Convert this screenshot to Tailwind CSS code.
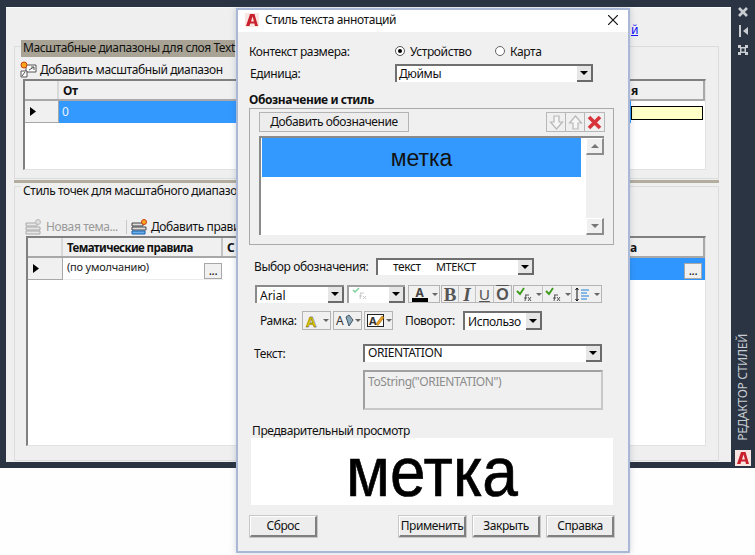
<!DOCTYPE html>
<html lang="ru">
<head>
<meta charset="utf-8">
<script src="https://cdn.jsdelivr.net/npm/@tailwindcss/browser@4"></script>
</head>
<body class="bg-white">
<div class="relative w-[755px] h-[555px] overflow-hidden bg-[#fefefe] text-[12px] leading-[16px] tracking-[-0.4px] text-[#111] font-['Noto_Sans',sans-serif]">

  <!-- background window -->
  <div class="flex h-[468px] bg-[#2b3442] pt-[7px] pb-[6px] pl-[6px]">
    <div class="w-[725px] h-[455px] bg-[#efefef] pl-[8px] border-t border-[#fafafa]">
      <div class="h-[38px] pl-[617px] pt-[14px] text-[#1212ff] underline">й</div>

      <!-- group 1 -->
      <div class="relative w-[705px] h-[133px] border border-[#dcdcdc] pl-[8px]">
        <div class="absolute left-[6px] top-[-7px] h-[17px] w-[214px] bg-[#a8a395] pl-[2px] text-[#111] whitespace-nowrap">Масштабные диапазоны для слоя Text</div>
        <div class="flex items-center h-[19px] mt-[13px] gap-[3px]">
          <svg width="17" height="17" viewBox="0 0 17 17" class="ml-[-3px]"><path d="M6 4h10v7H6z" fill="#fff" stroke="#555"/><path d="M9 9l5-3M14 6h-3M14 6v3" stroke="#555" fill="none"/><path d="M1 10h6v6H1z" fill="#fff" stroke="#555"/><path d="M5 11l-3 4" stroke="#555"/><circle cx="4" cy="4" r="3" fill="#f5a81c" stroke="#d33c10"/></svg>
          <span class="whitespace-nowrap">Добавить масштабный диапазон</span>
        </div>
        <!-- grid 1 -->
        <div class="w-[683px] h-[91px] border-t-2 border-l-2 border-[#808080] border-r border-b border-r-[#e2e2e2] border-b-[#e2e2e2] bg-white">
          <div class="flex h-[20px] bg-[#f0f0f0] border-b-2 border-[#a8a8a8] border-r-2 border-r-[#a8a8a8]">
            <div class="w-[34px] border-r-2 border-[#d8d8d8]"></div>
            <div class="w-[572px] pl-[4px] font-bold leading-[19px]">От</div>
            <div class="flex-1 font-bold leading-[19px]">я</div>
          </div>
          <div class="flex h-[22px] bg-[#3399ff]">
            <div class="flex items-center w-[34px] pl-[5px] bg-[#f0f0f0] border-r border-b border-[#a8a8a8]">
              <svg width="6" height="9" viewBox="0 0 6 9"><path d="M0 0l6 4.500-6 4.500z" fill="#000"/></svg>
            </div>
            <div class="w-[572px] pl-[3px] text-[#e8f3ff] leading-[21px]">0</div>
            <div class="flex-1 bg-white pt-[5px] pr-[2px]">
              <div class="h-[14px] bg-[#ffffc8] border border-black"></div>
            </div>
          </div>
        </div>
      </div>

      <div class="w-[705px] h-[3px] mt-[1px] bg-[#b3ad9e]"></div>

      <!-- group 2 -->
      <div class="relative w-[705px] h-[275px] mt-[3px] border border-[#dcdcdc] pl-[11px]">
        <div class="absolute left-[6px] top-[-4px] bg-[#efefef] px-[2px] whitespace-nowrap">Стиль точек для масштабного диапазона</div>
        <div class="flex items-center h-[19px] mt-[30px] ml-[-1px] whitespace-nowrap">
          <svg width="17" height="16" viewBox="0 0 17 16"><g fill="#e6e6e6" stroke="#aaa"><path d="M1 4h11v3H1zM1 8h14v3H1zM1 12h14v3H1z"/></g><circle cx="13" cy="3" r="2.500" fill="#ddd" stroke="#bbb"/></svg>
          <span class="ml-[4px] text-[#9a9a9a] w-[80px]">Новая тема...</span>
          <span class="w-px h-[14px] bg-[#c8c8c8]"></span>
          <svg width="17" height="16" viewBox="0 0 17 16" class="ml-[4px]"><path d="M1 4h11v3H1z" fill="#ddd" stroke="#444"/><path d="M1 8h14v3H1z" fill="#ddd" stroke="#444"/><path d="M1 12h13v3H1z" fill="#68aee8" stroke="#1760b0"/><circle cx="13" cy="3" r="2.500" fill="#f5a81c" stroke="#d33c10"/></svg>
          <span class="ml-[3px]">Добавить правило</span>
        </div>
        <!-- grid 2 -->
        <div class="w-[680px] h-[210px] border-t-2 border-l-2 border-[#808080] border-r border-b border-r-[#e2e2e2] border-b-[#e2e2e2] bg-white">
          <div class="flex h-[20px] bg-[#f0f0f0] border-b-2 border-r-2 border-[#a8a8a8]">
            <div class="w-[35px] border-r-2 border-[#d8d8d8]"></div>
            <div class="w-[160px] pl-[4px] font-bold leading-[19px] text-[11.500px] tracking-[-0.6px] whitespace-nowrap border-r-2 border-[#c4c4c4]">Тематические правила</div>
            <div class="w-[407px] pl-[4px] font-bold leading-[19px]">С</div>
            <div class="flex-1 font-bold leading-[19px]">а</div>
          </div>
          <div class="flex h-[22px] bg-white">
            <div class="flex items-center w-[35px] pl-[5px] bg-[#f0f0f0] border-r border-b border-[#a8a8a8]">
              <svg width="6" height="9" viewBox="0 0 6 9"><path d="M0 0l6 4.500-6 4.500z" fill="#000"/></svg>
            </div>
            <div class="flex justify-between w-[160px] pl-[4px] pr-[1px] pt-[1px] border-b border-[#ececec]">
              <span class="whitespace-nowrap text-[11px] tracking-[-0.2px] text-[#222]">(по умолчанию)</span>
              <span class="w-[18px] h-[16px] mt-[4px] border border-[#a8a8a8] bg-[#f0f0f0] text-center leading-[13px]">...</span>
            </div>
            <div class="w-[407px]"></div>
            <div class="flex-1 bg-[#2f96ff] pl-[54px] pt-[5px]">
              <span class="block w-[18px] h-[16px] border border-[#a8a8a8] bg-[#f0f0f0] text-center leading-[13px]">...</span>
            </div>
          </div>
        </div>
      </div>
    </div>

    <!-- side bar -->
    <div class="w-[24px] flex flex-col items-center mt-[-7px] mb-[-6px] pt-[6px] text-[#c8ccd2]">
      <svg width="12" height="12" viewBox="0 0 12 12"><path d="M2 2l8 8M10 2l-8 8" stroke="#c9cdd2" stroke-width="2.600" fill="none"/></svg>
      <svg width="12" height="12" viewBox="0 0 12 12" class="mt-[7px]"><path d="M2 0h2v12H2z" fill="#c9cdd2"/><path d="M11 2v8L6 6z" fill="#c9cdd2"/></svg>
      <svg width="12" height="12" viewBox="0 0 12 12" class="mt-[7px]"><path d="M1 1h3v2h4V1h3v3H9v4h2v3H8V9H4v2H1V8h2V4H1z" fill="#c9cdd2"/><path d="M4.500 4.500h3v3h-3z" fill="#2b3442"/></svg>
      <div class="mt-auto mb-[9px] [writing-mode:vertical-rl] rotate-180 text-[12px] tracking-[-0.3px] whitespace-nowrap text-[#c9cdd2]">РЕДАКТОР СТИЛЕЙ</div>
      <div class="flex items-center justify-center w-[16px] h-[16px] mb-[2px] bg-[#f8e4e0]">
        <svg width="12" height="12" viewBox="0 0 12 12"><path fill-rule="evenodd" d="M4 0h4.500l3.500 12H9l-.6-2.500H4.200L3.500 12H0zM5 7.500h3L6.500 2.500z" fill="#c8202c"/></svg>
      </div>
    </div>
  </div>

  <!-- dialog -->
  <div class="absolute left-[236px] top-[8px] w-[394px] h-[545px] border-2 border-[#a9b8d6] bg-[#f0f0f0] shadow-[0_0_6px_rgba(60,80,110,0.25)]">
    <div class="flex items-center h-[22px] bg-white pl-[7px] pr-[10px] pb-[3px]">
      <span class="flex items-center justify-center w-[14px] h-[14px] bg-[#f8e4e0]">
        <svg width="12" height="12" viewBox="0 0 12 12"><path fill-rule="evenodd" d="M4 0h4.500l3.500 12H9l-.6-2.500H4.200L3.500 12H0zM5 7.500h3L6.500 2.500z" fill="#c8202c"/></svg>
      </span>
      <span class="ml-[6px]">Стиль текста аннотаций</span>
      <svg width="10" height="10" viewBox="0 0 10 10" class="ml-auto"><path d="M0 0l10 10M10 0L0 10" stroke="#111" stroke-width="1.200"/></svg>
    </div>

    <div class="flex items-center h-[18px] mt-[10px] pl-[11px]">
      <span class="w-[146px] whitespace-nowrap pt-[1px]">Контекст размера:</span>
      <span class="flex items-center justify-center w-[10px] h-[10px] rounded-full border border-[#555] bg-white ml-[0px]"><span class="w-[4px] h-[4px] rounded-full bg-black"></span></span>
      <span class="ml-[5px] w-[85px] pt-[1px]">Устройство</span>
      <span class="w-[10px] h-[10px] rounded-full border border-[#666] bg-white"></span>
      <span class="ml-[5px] pt-[1px]">Карта</span>
    </div>
    <div class="flex items-center h-[18px] mt-[4px] pl-[12px]">
      <span class="w-[145px] pt-[2px]">Единица:</span>
      <div class="flex w-[198px] h-[18px] bg-white border-t-2 border-l-2 border-[#707070]">
        <span class="flex-1 pl-[2px] leading-[15px]">Дюймы</span>
        <span class="flex items-center justify-center w-[16px] bg-[#e6e6e6] border-r-2 border-b-2 border-[#6a6a6a]"><svg width="8" height="4" viewBox="0 0 8 4"><path d="M0 0h8L4 4z" fill="#000"/></svg></span>
      </div>
    </div>
    <div class="h-[17px] mt-[9px] pl-[11px] pt-[1px] font-bold whitespace-nowrap">Обозначение и стиль</div>

    <div class="w-[365px] h-[137px] ml-[11px] border border-[#a9a9a9] pl-[9px] pt-[3px]">
      <div class="flex h-[20px]">
        <div class="flex items-center justify-center w-[150px] border border-[#b4b4b4] bg-[#ededed]">Добавить обозначение</div>
        <div class="flex ml-[137px] border border-[#b8b8b8] w-[59px]">
          <span class="flex items-center justify-center w-[19px] border-r border-[#b8b8b8]"><svg width="15" height="15" viewBox="0 0 15 15"><path d="M5 1h5v6h3.500L7.500 14 1.500 7H5z" fill="#f6f6f6" stroke="#b8b8b8" stroke-width="1.200"/></svg></span>
          <span class="flex items-center justify-center w-[19px] border-r border-[#b8b8b8]"><svg width="15" height="15" viewBox="0 0 15 15"><path d="M5 14h5V8h3.500L7.500 1 1.500 8H5z" fill="#f6f6f6" stroke="#b8b8b8" stroke-width="1.200"/></svg></span>
          <span class="flex items-center justify-center flex-1"><svg width="15" height="15" viewBox="0 0 15 15"><path d="M2 2l11 11M13 2L2 13" stroke="#d8343c" stroke-width="3.600"/></svg></span>
        </div>
      </div>
      <div class="flex mt-[4px] w-[345px] h-[99px] border-t-2 border-l-2 border-[#8a8a8a] bg-white">
        <div class="w-[325px] pl-[1px]">
          <div class="flex items-center justify-center w-[319px] h-[39px] bg-[#3399ff] text-[23px] tracking-[0px] text-[#111] font-['Liberation_Sans',sans-serif]">метка</div>
        </div>
        <div class="flex flex-col justify-between w-[18px] bg-[#f0f0f0]">
          <span class="flex items-center justify-center h-[17px] bg-[#f0f0f0] border-r-2 border-b-2 border-[#8d8d8d] border-t border-l border-t-white border-l-white"><svg width="8" height="4" viewBox="0 0 8 4"><path d="M0 4h8L4 0z" fill="#777"/></svg></span>
          <span class="flex items-center justify-center h-[17px] bg-[#f0f0f0] border-r-2 border-b-2 border-[#8d8d8d] border-t border-l border-t-white border-l-white"><svg width="8" height="4" viewBox="0 0 8 4"><path d="M0 0h8L4 4z" fill="#777"/></svg></span>
        </div>
      </div>
    </div>

    <div class="flex items-center h-[17px] mt-[13px] pl-[16px]">
      <span class="w-[122px] whitespace-nowrap pt-[1px]">Выбор обозначения:</span>
      <div class="flex w-[158px] h-[17px] bg-white border-t-2 border-l-2 border-[#707070]">
        <span class="pl-[15px] w-[58px] leading-[13px]">текст</span>
        <span class="flex-1 leading-[14px] text-[11px]">МТЕКСТ</span>
        <span class="flex items-center justify-center w-[16px] bg-[#e6e6e6] border-r-2 border-b-2 border-[#6a6a6a]"><svg width="8" height="4" viewBox="0 0 8 4"><path d="M0 0h8L4 4z" fill="#000"/></svg></span>
      </div>
    </div>

    <div class="flex items-center h-[18px] mt-[10px] pl-[17px]">
      <div class="flex w-[89px] h-[18px] bg-white border-t-2 border-l-2 border-[#8a8a8a]">
        <span class="flex-1 pl-[3px] leading-[17px] tracking-[0px]">Arial</span>
        <span class="flex items-center justify-center w-[16px] bg-[#e6e6e6] border-r-2 border-b-2 border-[#6a6a6a]"><svg width="8" height="4" viewBox="0 0 8 4"><path d="M0 0h8L4 4z" fill="#000"/></svg></span>
      </div>
      <div class="flex w-[58px] h-[18px] ml-[3px] bg-white border-t-2 border-l-2 border-[#a0a0a0]">
        <span class="flex-1 pl-[3px]"><svg width="16" height="13" viewBox="0 0 16 13"><path d="M1 3l2 2 4-4" stroke="#7fcf9a" stroke-width="1.500" fill="none"/><path d="M8 6h4M9 6l-1 6M7 9h3M11 9l3 3M14 9l-3 3" stroke="#c8c8c8" fill="none"/></svg></span>
        <span class="flex items-center justify-center w-[16px] bg-[#e6e6e6] border-r-2 border-b-2 border-[#6a6a6a]"><svg width="8" height="4" viewBox="0 0 8 4"><path d="M0 0h8L4 4z" fill="#000"/></svg></span>
      </div>
      <div class="flex items-center h-[18px] w-[32px] ml-[3px] border border-[#b4b4b4]">
        <span class="flex flex-col items-center w-[21px] pt-[1px]"><span class="text-[12px] leading-[11px] font-bold text-[#444]">A</span><span class="w-[16px] h-[4px] bg-black"></span></span>
        <svg width="6" height="3" viewBox="0 0 6 3" class="ml-[2px]"><path d="M0 0h6L3 3z" fill="#666"/></svg>
      </div>
      <div class="flex h-[18px] ml-[1px] border border-[#b4b4b4] font-['Liberation_Serif',serif] text-[19px] leading-[17px] tracking-[0px] text-[#555] text-center">
        <span class="w-[17px] font-bold border-r border-[#c4c4c4]">B</span>
        <span class="w-[17px] italic font-bold border-r border-[#c4c4c4]">I</span>
        <span class="w-[18px] font-['Liberation_Sans',sans-serif] text-[15px] underline border-r border-[#c4c4c4]">U</span>
        <span class="w-[17px] font-['Liberation_Sans',sans-serif] text-[16px] font-bold overline">O</span>
      </div>
      <div class="flex h-[18px] ml-[1px] border border-[#b4b4b4]">
        <span class="flex items-center w-[29px] border-r border-[#c4c4c4] pl-[2px]"><svg width="17" height="15" viewBox="0 0 17 15"><path d="M1 4l3 3 4-6" stroke="#3a9a18" stroke-width="1.800" fill="none"/><path d="M9 8h4M10 8l-1 6M8 11h3M12 10l3 4M15 10l-3 4" stroke="#555" fill="none"/></svg><svg width="6" height="3" viewBox="0 0 6 3" class="ml-[3px]"><path d="M0 0h6L3 3z" fill="#666"/></svg></span>
        <span class="flex items-center w-[29px] border-r border-[#c4c4c4] pl-[2px]"><svg width="17" height="15" viewBox="0 0 17 15"><path d="M1 4l3 3 4-6" stroke="#3a9a18" stroke-width="1.800" fill="none"/><path d="M9 8h4M10 8l-1 6M8 11h3M12 10l3 4M15 10l-3 4" stroke="#555" fill="none"/></svg><svg width="6" height="3" viewBox="0 0 6 3" class="ml-[3px]"><path d="M0 0h6L3 3z" fill="#666"/></svg></span>
        <span class="flex items-center w-[29px] pl-[2px]"><svg width="16" height="15" viewBox="0 0 16 15"><path d="M3 1v13M1.500 3L3 1l1.500 2M1.500 12L3 14l1.500-2" stroke="#111" fill="none"/><path d="M7 3h8M7 6h6M7 9h8M7 12h6" stroke="#1f7fd8" stroke-width="1.200"/></svg><svg width="6" height="3" viewBox="0 0 6 3" class="ml-[4px]"><path d="M0 0h6L3 3z" fill="#666"/></svg></span>
      </div>
    </div>

    <div class="flex items-center h-[19px] mt-[8px] pl-[22px]">
      <span class="w-[42px]">Рамка:</span>
      <div class="flex items-center w-[29px] h-[19px] border border-[#b4b4b4] pl-[3px]"><span class="w-[14px] text-[15px] tracking-[0px] font-bold text-[#d8c400] [-webkit-text-stroke:0.3px_#333]">A</span><svg width="6" height="3" viewBox="0 0 6 3" class="ml-[3px]"><path d="M0 0h6L3 3z" fill="#666"/></svg></div>
      <div class="flex items-center w-[29px] h-[19px] ml-[2px] border border-[#b4b4b4] pl-[2px]"><span class="w-[9px] text-[12px] tracking-[0px] text-[#333]">A</span><svg width="9" height="13" viewBox="0 0 9 13"><path d="M1 3l3-2 4 5-4 6z" fill="#8aa8b8" stroke="#456"/></svg><svg width="6" height="3" viewBox="0 0 6 3" class="ml-[1px]"><path d="M0 0h6L3 3z" fill="#666"/></svg></div>
      <div class="flex items-center w-[29px] h-[19px] ml-[2px] border border-[#b4b4b4] pl-[2px]">
        <span class="relative w-[17px] h-[13px] bg-white border border-[#222] text-[11px] leading-[11px] tracking-[0px] pl-[1px] font-bold text-[#333]">A<svg width="10" height="12" viewBox="0 0 10 12" class="absolute left-[7px] top-[-1px]"><path d="M1 10l6-8 2 1.500-6 8z" fill="#e8a020" stroke="#a86810" stroke-width=".6"/></svg></span>
        <svg width="6" height="3" viewBox="0 0 6 3" class="ml-[2px]"><path d="M0 0h6L3 3z" fill="#666"/></svg>
      </div>
      <span class="w-[58px] ml-[12px]">Поворот:</span>
      <div class="flex w-[79px] h-[19px] bg-white border-t-2 border-l-2 border-[#707070]">
        <span class="flex-1 pl-[3px] whitespace-nowrap leading-[17px]">Использо</span>
        <span class="flex items-center justify-center w-[16px] bg-[#e6e6e6] border-r-2 border-b-2 border-[#6a6a6a]"><svg width="8" height="4" viewBox="0 0 8 4"><path d="M0 0h8L4 4z" fill="#000"/></svg></span>
      </div>
    </div>

    <div class="flex items-center h-[18px] mt-[14px] pl-[16px]">
      <span class="w-[109px] pt-[1px]">Текст:</span>
      <div class="flex w-[239px] h-[18px] bg-white border-t-2 border-l-2 border-[#707070]">
        <span class="flex-1 pl-[3px] leading-[14px]">ORIENTATION</span>
        <span class="flex items-center justify-center w-[16px] bg-[#e6e6e6] border-r-2 border-b-2 border-[#6a6a6a]"><svg width="8" height="4" viewBox="0 0 8 4"><path d="M0 0h8L4 4z" fill="#000"/></svg></span>
      </div>
    </div>
    <div class="w-[240px] h-[40px] mt-[8px] ml-[125px] border-2 border-[#a0a0a0] border-r-[#c8c8c8] border-b-[#c8c8c8] pl-[3px] pt-[2px] text-[#8c8c8c] whitespace-nowrap">ToString("ORIENTATION")</div>

    <div class="h-[14px] mt-[14px] pl-[14px] leading-[14px] whitespace-nowrap">Предварительный просмотр</div>
    <div class="flex items-center justify-center w-[362px] h-[67px] ml-[13px] bg-white text-[64px] leading-[60px] tracking-[0px] text-black font-['Liberation_Sans',sans-serif]">
      <span class="inline-block scale-y-110 [-webkit-text-stroke:0.6px_black]">метка</span>
    </div>

    <div class="flex h-[21px] mt-[11px] ml-[12px]">
      <span class="flex items-center justify-center w-[67px] bg-[#ededed] border border-[#fff] border-r-2 border-b-2 border-r-[#808080] border-b-[#808080] outline outline-[#c8c8c8]">Сброс</span>
      <span class="flex items-center justify-center w-[67px] ml-[82px] bg-[#ededed] border border-[#fff] border-r-2 border-b-2 border-r-[#808080] border-b-[#808080] outline outline-[#c8c8c8]">Применить</span>
      <span class="flex items-center justify-center w-[67px] ml-[7px] bg-[#ededed] border border-[#fff] border-r-2 border-b-2 border-r-[#808080] border-b-[#808080] outline outline-[#c8c8c8]">Закрыть</span>
      <span class="flex items-center justify-center w-[67px] ml-[7px] bg-[#ededed] border border-[#fff] border-r-2 border-b-2 border-r-[#808080] border-b-[#808080] outline outline-[#c8c8c8]">Справка</span>
    </div>
  </div>
</div>
</body>
</html>
